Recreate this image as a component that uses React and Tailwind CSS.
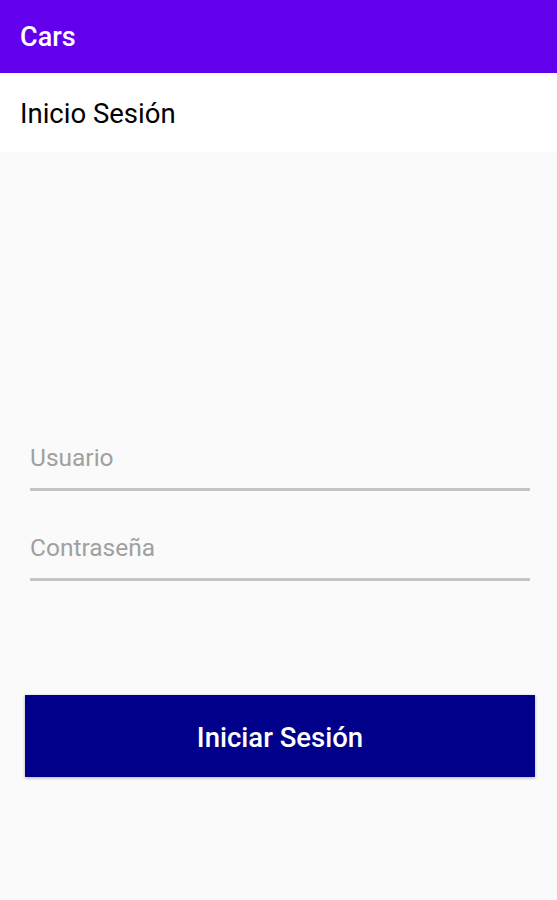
export default function App() {
  return (
    <div className="w-[557px] h-[900px] bg-[#fafafa] flex flex-col" style={{ fontFamily: 'Roboto, "Liberation Sans", sans-serif' }}>
      <div className="h-[73px] bg-[#6200ee] flex items-center px-[20px] pt-[2px]">
        <span className="text-white text-[27px] font-medium">Cars</span>
      </div>
      <div className="h-[79px] bg-white flex items-center px-[20px] pt-[2px]">
        <span className="text-black text-[27.5px]">Inicio Sesión</span>
      </div>
      <div className="flex flex-col pl-[30px] pr-[27px] pt-[291px] w-full">
        <div className="h-[30px] leading-[30px] text-[24.5px] text-[#a0a0a0]">Usuario</div>
        <div className="h-[15px]" />
        <div className="h-[3px] bg-[#c4c4c4]" />
        <div className="h-[42px]" />
        <div className="h-[30px] leading-[30px] text-[24.5px] text-[#a0a0a0]">Contraseña</div>
        <div className="h-[15px]" />
        <div className="h-[3px] bg-[#c4c4c4]" />
      </div>
      <div className="pl-[25px] pr-[22px] pt-[114px]">
        <div className="h-[82px] bg-[#00008b] flex items-center justify-center pt-[3px] shadow-[0_1px_3px_rgba(0,0,0,0.3)]">
          <span className="text-white text-[27.5px] font-medium">Iniciar Sesión</span>
        </div>
      </div>
    </div>
  );
}
